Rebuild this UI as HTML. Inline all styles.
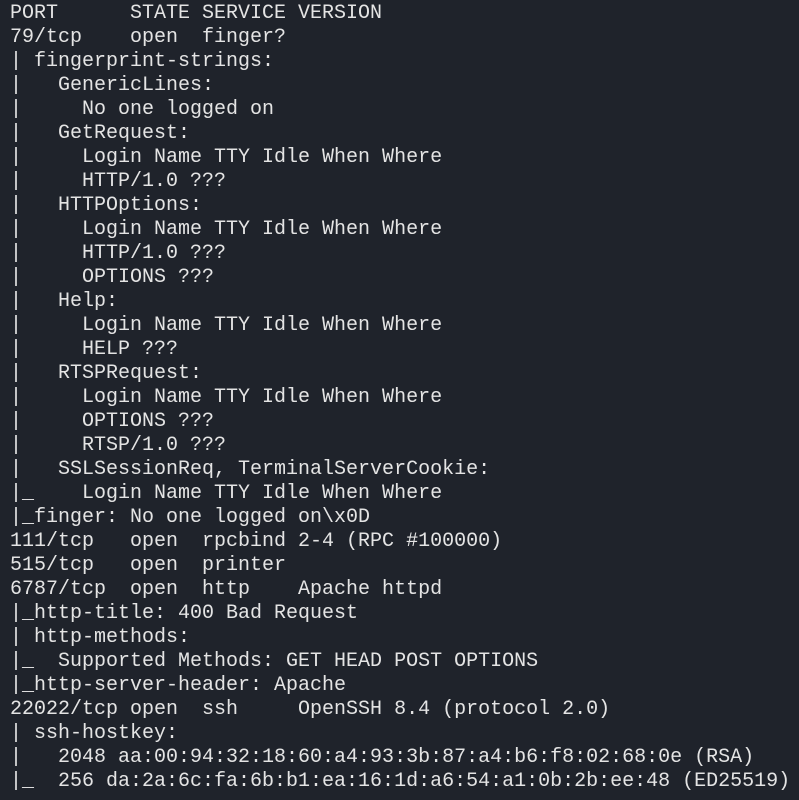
<!DOCTYPE html>
<html><head><meta charset="utf-8"><style>
html,body{margin:0;padding:0;background:#1f232b;width:799px;height:800px;overflow:hidden}
pre{margin:0;padding:2px 0 0 10px;font-family:"Liberation Mono","DejaVu Sans Mono",monospace;font-size:20px;line-height:24px;color:#e4e4e4;white-space:pre}
</style></head><body><pre>PORT      STATE SERVICE VERSION
79/tcp    open  finger?
| fingerprint-strings:
|   GenericLines:
|     No one logged on
|   GetRequest:
|     Login Name TTY Idle When Where
|     HTTP/1.0 ???
|   HTTPOptions:
|     Login Name TTY Idle When Where
|     HTTP/1.0 ???
|     OPTIONS ???
|   Help:
|     Login Name TTY Idle When Where
|     HELP ???
|   RTSPRequest:
|     Login Name TTY Idle When Where
|     OPTIONS ???
|     RTSP/1.0 ???
|   SSLSessionReq, TerminalServerCookie:
|_    Login Name TTY Idle When Where
|_finger: No one logged on\x0D
111/tcp   open  rpcbind 2-4 (RPC #100000)
515/tcp   open  printer
6787/tcp  open  http    Apache httpd
|_http-title: 400 Bad Request
| http-methods:
|_  Supported Methods: GET HEAD POST OPTIONS
|_http-server-header: Apache
22022/tcp open  ssh     OpenSSH 8.4 (protocol 2.0)
| ssh-hostkey:
|   2048 aa:00:94:32:18:60:a4:93:3b:87:a4:b6:f8:02:68:0e (RSA)
|_  256 da:2a:6c:fa:6b:b1:ea:16:1d:a6:54:a1:0b:2b:ee:48 (ED25519)</pre></body></html>
